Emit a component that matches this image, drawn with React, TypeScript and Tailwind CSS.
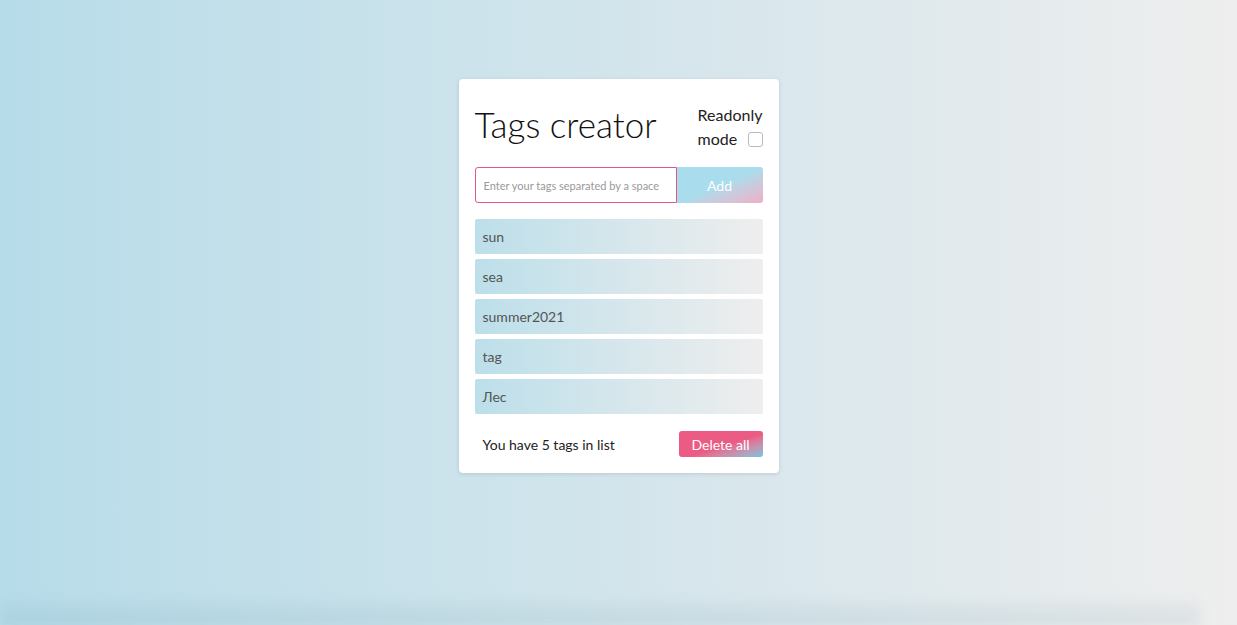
export default function App() {
  const tags = ["sun", "sea", "summer2021", "tag", "Лес"];

  return (
    <div className="relative h-[625px] w-full overflow-hidden bg-gradient-to-r from-[#b7dce9] to-[#eeeeee] font-['Lato',sans-serif]">
      <div className="flex justify-center pt-[79px]">
        <div className="w-[320px] rounded-[4px] bg-white px-4 pt-[24px] pb-4 shadow-[0_1px_4px_rgba(0,0,0,0.12)]">
          <div className="flex items-start justify-between">
            <h1 className="text-[35px] font-light leading-[42px] text-[#111]">Tags creator</h1>
            <label className="flex flex-col items-start text-[16px] leading-[24px] text-[#222]">
              <span>Readonly</span>
              <span className="flex w-full items-center justify-between gap-[10px]">
                mode
                <span className="h-[15px] w-[15px] rounded-[3px] border border-[#bbb] bg-white" />
              </span>
            </label>
          </div>

          <div className="mt-[16px] flex h-[36px]">
            <input
              placeholder="Enter your tags separated by a space"
              className="h-full w-[202px] rounded-l-[3px] border border-[#e2578a] px-[8px] text-[11px] text-[#333] placeholder:text-[#999] outline-none"
            />
            <button className="h-full flex-1 rounded-r-[3px] bg-gradient-to-br from-[#a9dcec] from-50% to-[#efaec6] text-[14px] text-white">
              Add
            </button>
          </div>

          <ul className="mt-[16px] flex flex-col gap-[5px]">
            {tags.map((t) => (
              <li
                key={t}
                className="flex h-[35px] items-center rounded-[2px] bg-gradient-to-r from-[#bcdfea] to-[#eeeeee] px-[8px] text-[14px] text-[#555]"
              >
                {t}
              </li>
            ))}
          </ul>

          <div className="mt-[17px] flex items-center justify-between">
            <span className="pl-[8px] text-[14px] text-[#222]">You have 5 tags in list</span>
            <button className="h-[26px] w-[84px] rounded-[3px] bg-gradient-to-br from-[#ec5b84] from-55% to-[#6fc1e2] text-[14px] text-white">
              Delete all
            </button>
          </div>
        </div>
      </div>
      <div className="pointer-events-none absolute bottom-0 left-0 h-[28px] w-[1200px] bg-gradient-to-b from-transparent to-[rgba(60,110,130,0.12)] blur-[6px]" />
    </div>
  );
}
